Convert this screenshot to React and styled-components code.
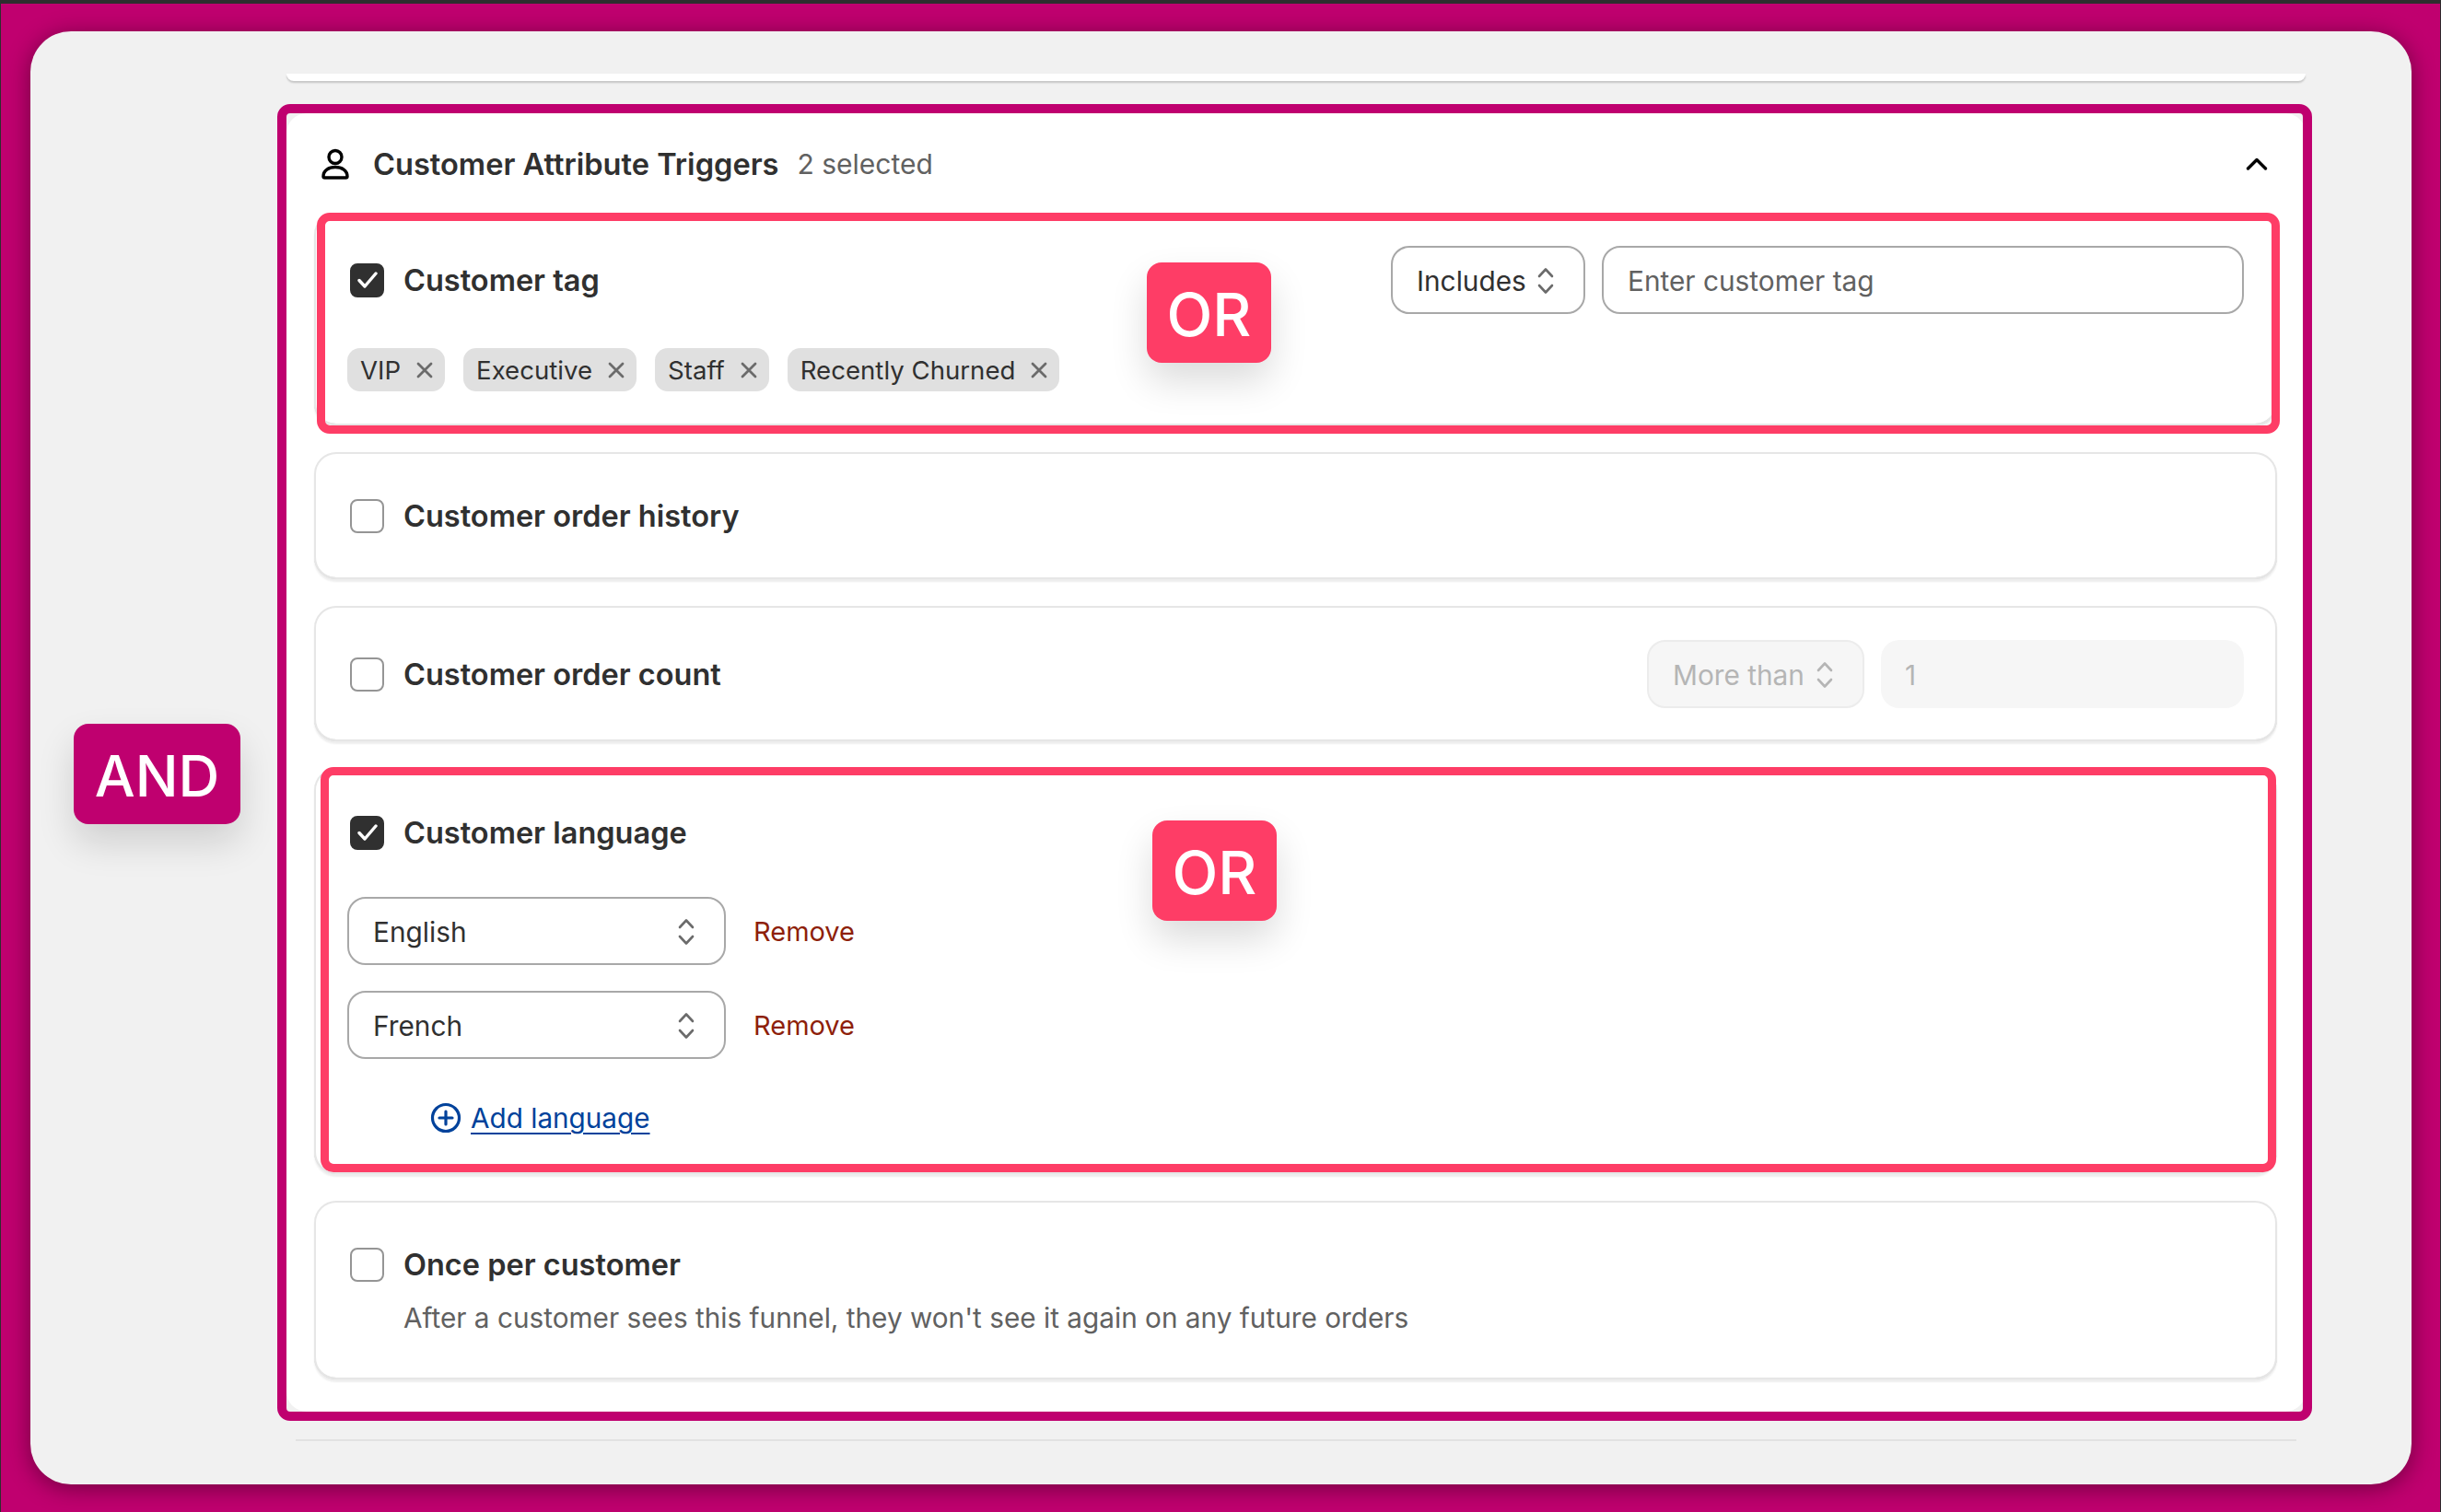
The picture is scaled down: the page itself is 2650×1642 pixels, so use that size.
import React from "react";
import styled, { createGlobalStyle } from "styled-components";

const Global = createGlobalStyle`
  html, body { margin: 0; padding: 0; }
  body { font-family: Inter, "Liberation Sans", sans-serif; background: #c0006f; }
  * { box-sizing: border-box; }
`;

const Page = styled.div`
  width: 2650px;
  height: 1642px;
  overflow: hidden;
  background: #c0006f;
  border-top: 4px solid #2e2e2e;
  border-left: 1px solid #2e2e2e;
  border-right: 1px solid #2e2e2e;
  padding: 30px 31px 30px 32px;
`;

const Shell = styled.div`
  position: relative;
  height: 1578px;
  background: #f1f1f1;
  border-radius: 44px;
  box-shadow: 0 4px 26px rgba(0, 0, 0, 0.42);
  padding: 46px 115px 0 278px;
  display: flex;
  flex-direction: column;
`;

const Stub = styled.div`
  height: 8px;
  background: #fff;
  border-radius: 0 0 20px 20px;
  box-shadow: 0 2px 2px rgba(0, 0, 0, 0.18);
`;

const Section = styled.section`
  position: relative;
  margin-top: 35px;
  height: 1410px;
  background: #fff;
  border-radius: 22px;
  padding: 0 31px 0 30px;
`;

const Frame = styled.div`
  position: absolute;
  inset: -10px -7px -10px -10px;
  border: 10px solid #bf006f;
  border-radius: 14px;
  pointer-events: none;
  z-index: 3;
`;

const Rule = styled.div`
  height: 2px;
  margin: 30px 10px 0 10px;
  background: #e2e2e2;
`;

const SectionHead = styled.header`
  height: 108px;
  display: flex;
  align-items: center;
  padding: 2px 10px 0 8px;
`;

const SectionTitle = styled.h2`
  margin: 0 0 0 26px;
  font-size: 32.6px;
  font-weight: 600;
  color: #303030;
`;

const SectionMeta = styled.span`
  margin-left: 20px;
  font-size: 30px;
  color: #616161;
  flex: 1;
`;

const List = styled.div`
  display: flex;
  flex-direction: column;
  gap: 29px;
`;

const Card = styled.div`
  position: relative;
  height: ${(p) => p.$h}px;
  padding: ${(p) => p.$pt}px 36px 0;
  background: #fff;
  border-radius: 24px;
  box-shadow: inset 0 0 0 2px #e6e6e6, inset 0 -2px 0 #cfcfcf, 0 3px 2px rgba(0, 0, 0, 0.07);
`;

const Row = styled.div`
  min-height: ${(p) => p.$h || 74}px;
  display: flex;
  align-items: center;
  justify-content: space-between;
`;

const CheckWrap = styled.label`
  display: flex;
  align-items: center;
  gap: 21px;
  margin-left: 3px;
`;

const Box = styled.span`
  width: 37px;
  height: 37px;
  border-radius: 8px;
  display: flex;
  align-items: center;
  justify-content: center;
  flex: none;
  background: ${(p) => (p.$on ? "#303030" : "#fff")};
  border: 2px solid ${(p) => (p.$on ? "#303030" : "#959595")};
`;

const Label = styled.span`
  font-size: 32.5px;
  font-weight: 600;
  color: #303030;
`;

const Controls = styled.div`
  display: flex;
  gap: 18px;
`;

const Select = styled.div`
  height: 74px;
  width: ${(p) => p.$w}px;
  display: flex;
  align-items: center;
  justify-content: space-between;
  padding: 1px 31px 0 26px;
  border-radius: 20px;
  font-size: 29.8px;
  color: ${(p) => (p.$off ? "#b5b5b5" : "#303030")};
  background: ${(p) => (p.$off ? "#f6f6f6" : "#fff")};
  border: 2px solid ${(p) => (p.$off ? "#ececec" : "#a8a8a8")};
`;

const Input = styled.div`
  height: 74px;
  width: ${(p) => p.$w}px;
  display: flex;
  align-items: center;
  padding: 1px 26px 0;
  border-radius: 20px;
  font-size: 29.8px;
  color: ${(p) => (p.$off ? "#b5b5b5" : "#616161")};
  background: ${(p) => (p.$off ? "#f6f6f6" : "#fff")};
  border: ${(p) => (p.$off ? "none" : "2px solid #a8a8a8")};
`;

const Tags = styled.div`
  display: flex;
  gap: 20px;
  margin-top: 37px;
`;

const Tag = styled.span`
  height: 47px;
  display: inline-flex;
  align-items: center;
  gap: 16px;
  padding: 0 12px 0 14px;
  background: #e0e0e0;
  border-radius: 14px;
  font-size: 27.6px;
  color: #303030;
`;

const Highlight = styled.div`
  position: absolute;
  inset: ${(p) => p.$inset};
  border: 9px solid #fe3d66;
  border-radius: 14px;
  pointer-events: none;
  z-index: 2;
`;

const Badge = styled.div`
  position: absolute;
  left: ${(p) => p.$x}px;
  top: ${(p) => p.$y}px;
  width: ${(p) => p.$w}px;
  height: 109px;
  padding-top: 3px;
  display: flex;
  align-items: center;
  justify-content: center;
  border-radius: 16px;
  background: ${(p) => p.$bg};
  color: #fff;
  font-size: ${(p) => p.$fs}px;
  font-weight: 500;
  box-shadow: 0 20px 40px rgba(0, 0, 0, 0.14);
  z-index: 4;
`;

const LangRow = styled.div`
  display: flex;
  align-items: center;
  gap: 30px;
  margin-top: ${(p) => p.$mt}px;
`;

const Remove = styled.span`
  font-size: 29px;
  color: #8e1f0b;
`;

const AddLink = styled.div`
  display: flex;
  align-items: center;
  gap: 10px;
  margin: 46px 0 0 90px;
  font-size: 29.7px;
  color: #00429b;
  text-decoration: underline;
  text-underline-offset: 5px;
  text-decoration-thickness: 2px;
`;

const Help = styled.p`
  margin: 1px 0 0 61px;
  font-size: 29.75px;
  line-height: 40px;
  color: #616161;
`;

const Svg = styled.svg`
  display: block;
  flex: none;
`;

const Tick = () => (
  <Svg width="22" height="22" viewBox="0 0 22 22" fill="none" stroke="#fff" strokeWidth="3.4" strokeLinecap="round" strokeLinejoin="round">
    <path d="M2 11.5 L8 18 L20 4" />
  </Svg>
);

const Person = () => (
  <Svg width="30" height="34" viewBox="0 0 30 34" fill="none" stroke="#000" strokeWidth="3.4" strokeLinejoin="round">
    <circle cx="15" cy="9.5" r="7" />
    <path d="M2 30.5 C2 24 8 20.5 15 20.5 C22 20.5 28 24 28 30.5 C28 31.5 27.5 32 26.5 32 L3.5 32 C2.5 32 2 31.5 2 30.5 Z" />
  </Svg>
);

const ChevronUp = () => (
  <Svg width="24" height="14" viewBox="0 0 24 14" fill="none" stroke="#000" strokeWidth="3.4" strokeLinecap="round" strokeLinejoin="round">
    <path d="M2.5 12 L12 2.5 L21.5 12" />
  </Svg>
);

const UpDown = ({ color = "#6b6b6b" }) => (
  <Svg width="20" height="30" viewBox="0 0 20 30" fill="none" stroke={color} strokeWidth="2.6" strokeLinecap="round" strokeLinejoin="round">
    <path d="M3 10 L10 2.5 L17 10" />
    <path d="M3 20 L10 27.5 L17 20" />
  </Svg>
);

const Cross = () => (
  <Svg width="20" height="20" viewBox="0 0 20 20" fill="none" stroke="#6b6b6b" strokeWidth="2.8" strokeLinecap="round">
    <path d="M3 3 L17 17 M17 3 L3 17" />
  </Svg>
);

const PlusCircle = () => (
  <Svg width="34" height="34" viewBox="0 0 34 34" fill="none" stroke="#00429b" strokeWidth="3.2" strokeLinecap="round">
    <circle cx="17" cy="17" r="14.5" />
    <path d="M17 10 V24 M10 17 H24" />
  </Svg>
);

const Check = ({ on, children }) => (
  <CheckWrap>
    <Box $on={on}>{on && <Tick />}</Box>
    <Label>{children}</Label>
  </CheckWrap>
);

const tags = ["VIP", "Executive", "Staff", "Recently Churned"];

export default function App() {
  return (
    <Page>
      <Global />
      <Shell>
        <Badge $x={47} $y={752} $w={181} $fs={62} $bg="#bf006f">AND</Badge>
        <Stub />
        <Section>
          <Frame />
          <SectionHead>
            <Person />
            <SectionTitle>Customer Attribute Triggers</SectionTitle>
            <SectionMeta>2 selected</SectionMeta>
            <ChevronUp />
          </SectionHead>
          <List>
            <Card $h={231} $pt={36}>
              <Highlight $inset="0 -3px -9px 3px" />
              <Badge $x={904} $y={54} $w={135} $fs={65} $bg="#fe3d66">OR</Badge>
              <Row>
                <Check on>Customer tag</Check>
                <Controls>
                  <Select $w={211}>Includes <UpDown /></Select>
                  <Input $w={697}>Enter customer tag</Input>
                </Controls>
              </Row>
              <Tags>
                {tags.map((t) => (
                  <Tag key={t}>{t}<Cross /></Tag>
                ))}
              </Tags>
            </Card>
            <Card $h={138} $pt={32}>
              <Row>
                <Check>Customer order history</Check>
              </Row>
            </Card>
            <Card $h={147} $pt={37}>
              <Row>
                <Check>Customer order count</Check>
                <Controls>
                  <Select $w={236} $off>More than <UpDown color="#b5b5b5" /></Select>
                  <Input $w={394} $off>1</Input>
                </Controls>
              </Row>
            </Card>
            <Card $h={441} $pt={33}>
              <Highlight $inset="-1px 1px 2px 7px" />
              <Badge $x={910} $y={57} $w={135} $fs={65} $bg="#fe3d66">OR</Badge>
              <Row>
                <Check on>Customer language</Check>
              </Row>
              <LangRow $mt={33}>
                <Select $w={411}>English <UpDown /></Select>
                <Remove>Remove</Remove>
              </LangRow>
              <LangRow $mt={28}>
                <Select $w={411}>French <UpDown /></Select>
                <Remove>Remove</Remove>
              </LangRow>
              <AddLink><PlusCircle />Add language</AddLink>
            </Card>
            <Card $h={194} $pt={32}>
              <Row>
                <Check>Once per customer</Check>
              </Row>
              <Help>After a customer sees this funnel, they won't see it again on any future orders</Help>
            </Card>
          </List>
        </Section>
        <Rule />
      </Shell>
    </Page>
  );
}
